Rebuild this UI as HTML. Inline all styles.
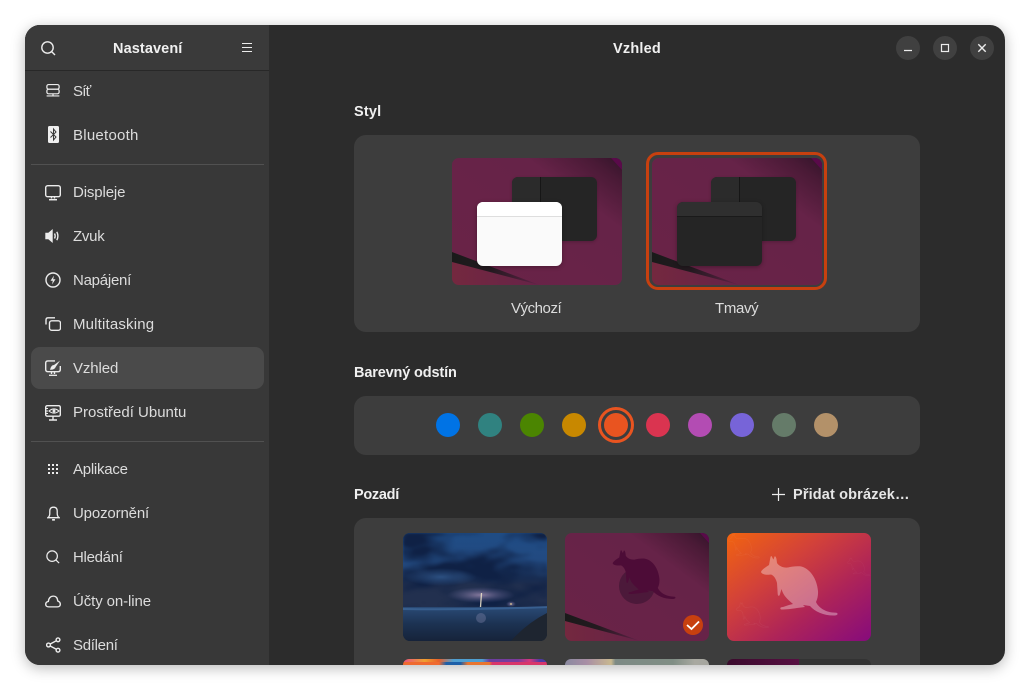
<!DOCTYPE html>
<html><head><meta charset="utf-8"><style>
*{box-sizing:border-box}
html,body{margin:0;width:1030px;height:690px;background:#fff;overflow:hidden;font-family:"Liberation Sans",sans-serif}
.win{position:absolute;left:25px;top:25px;width:980px;height:640px;border-radius:15px;background:#2c2c2c;overflow:hidden}
.shadow{position:absolute;left:25px;top:25px;width:980px;height:640px;border-radius:15px;box-shadow:0 3px 14px rgba(0,0,0,.28)}
.abs,.t,svg.i{position:absolute}
.side{position:absolute;left:0;top:0;width:244px;height:640px;background:#383838}
.head{position:absolute;left:0;top:0;width:244px;height:46px;background:#3a3a3a;border-bottom:1px solid #282828}
.t{white-space:nowrap;color:#dcdcdc;font-size:15px;line-height:18px}
.b{font-weight:bold;color:#f0f0f0;font-size:14.5px;letter-spacing:.2px}
.card{position:absolute;left:329px;width:566px;background:#3d3d3d;border-radius:12px}
.sep{position:absolute;left:6px;width:233px;height:1px;background:#515151}
.dot{position:absolute;width:24px;height:24px;border-radius:50%;top:388px}
.thumb{position:absolute;width:144px;height:108px;border-radius:7px;overflow:hidden}
.low{height:6px;border-radius:7px 7px 0 0}
svg.i{fill:none;stroke:#ececec;stroke-width:1.4}
.btn{position:absolute;top:11px;width:24px;height:24px;border-radius:50%;background:#404040}
</style></head><body>
<div class="shadow"></div>
<div class="win">
<div class="side">
 <div class="t" style="left:48px;top:58px;letter-spacing:-.8px">Síť</div>
 <div class="t" style="left:48px;top:102px;letter-spacing:.25px">Bluetooth</div>
 <div class="sep" style="top:139px"></div>
 <div class="t" style="left:48px;top:159px;letter-spacing:-.13px">Displeje</div>
 <div class="t" style="left:48px;top:203px;letter-spacing:-.25px">Zvuk</div>
 <div class="t" style="left:48px;top:247px;letter-spacing:-.25px">Napájení</div>
 <div class="t" style="left:48px;top:291px;letter-spacing:.17px">Multitasking</div>
 <div class="abs" style="left:6px;top:322px;width:233px;height:42px;border-radius:9px;background:#4a4a4a"></div>
 <div class="t" style="left:48px;top:335px;letter-spacing:-.1px">Vzhled</div>
 <div class="t" style="left:48px;top:379px">Prostředí Ubuntu</div>
 <div class="sep" style="top:416px"></div>
 <div class="t" style="left:48px;top:436px;letter-spacing:-.25px">Aplikace</div>
 <div class="t" style="left:48px;top:480px;letter-spacing:-.15px">Upozornění</div>
 <div class="t" style="left:48px;top:524px;letter-spacing:-.3px">Hledání</div>
 <div class="t" style="left:48px;top:568px;letter-spacing:-.1px">Účty on-line</div>
 <div class="t" style="left:48px;top:612px;letter-spacing:-.3px">Sdílení</div>
 <svg class="i" style="left:21px;top:59px" width="14" height="14" viewBox="0 0 16 17" preserveAspectRatio="none"><rect x="1" y=".7" width="14" height="5.6" rx="2"/><rect x="1" y="6.3" width="14" height="5.6" rx="2"/><path d="M0.7 14.5H15.3M8 12v2.5"/></svg>
 <svg class="i" style="left:23px;top:101px;stroke:none" width="11" height="17" viewBox="0 0 11 17"><rect x="0" y="0" width="11" height="17" rx="1.5" fill="#efefef"/><path d="M2.5 5.5 8 11 5.5 14V3L8 6 2.5 11.5" fill="none" stroke="#383838" stroke-width="1"/></svg>
 <svg class="i" style="left:20px;top:160px" width="16" height="16" viewBox="0 0 16 16"><rect x=".7" y=".7" width="14.6" height="11" rx="2"/><path d="M6.5 12v1.5M9.500 12v1.500" /><path d="M4 14.700H12" stroke-width="1.500"/></svg>
 <svg class="i" style="left:20px;top:203px" width="16" height="16" viewBox="0 0 16 16"><path d="M1 5.500H3.500L7 2.500V13.500L3.500 10.500H1Z" fill="#ececec"/><path d="M9.500 5.500Q10.800 8 9.500 10.500M11.800 3.800Q14 8 11.800 12.200"/></svg>
 <svg class="i" style="left:20px;top:247px" width="16" height="16" viewBox="0 0 16 16"><circle cx="8" cy="8" r="7"/><path d="M9 3.500 5.500 8.700H7.800L7 12.500 10.500 7.300H8.200Z" fill="#ececec" stroke="none"/></svg>
 <svg class="i" style="left:20px;top:292px" width="16" height="14" viewBox="0 0 16 14"><path d="M1 7.500V3Q1 .8 3 .8H10"/><rect x="4.500" y="3.800" width="11" height="9.500" rx="2.200"/></svg>
 <svg class="i" style="left:20px;top:335px" width="16" height="17" viewBox="0 0 16 17"><path d="M10 .9H3Q.7 .9 .7 3V9.500Q.7 11.700 3 11.700H13Q15.300 11.700 15.300 9.500V6"/><path d="M6.500 12v2M9.500 12v2"/><path d="M4 15.300H12" stroke-width="1.300"/><path d="M15 .6 9 5Q6 5 5 9.800Q9.800 10 10.800 6.800Z" fill="#ececec" stroke="none"/></svg>
 <svg class="i" style="left:20px;top:380px" width="16" height="16" viewBox="0 0 16 16"><rect x=".7" y=".7" width="14.600" height="10.500" rx="1.500"/><path d="M4 6Q9 1.800 14 6Q9 10.200 4 6Z" stroke-width="1.100"/><circle cx="9" cy="6" r="1.500" fill="#ececec" stroke="none"/><path d="M1 3.500H3M1 6H3M1 8.500H3" stroke-width="1.100"/><path d="M4 15H12M8 11.500v3.500"/></svg>
 <svg class="i" style="left:23px;top:439px;stroke:none;fill:#ececec" width="10" height="10" viewBox="0 0 10 10"><rect x="0" y="0" width="2" height="2"/><rect x="4" y="0" width="2" height="2"/><rect x="8" y="0" width="2" height="2"/><rect x="0" y="4" width="2" height="2"/><rect x="4" y="4" width="2" height="2"/><rect x="8" y="4" width="2" height="2"/><rect x="0" y="8" width="2" height="2"/><rect x="4" y="8" width="2" height="2"/><rect x="8" y="8" width="2" height="2"/></svg>
 <svg class="i" style="left:21.500px;top:481px" width="13" height="15" viewBox="0 0 14 16"><path d="M1 12.500H13Q11 11 11 8V5.500Q11 1.200 7 1.200Q3 1.200 3 5.500V8Q3 11 1 12.500Z"/><path d="M5.500 14.800H8.500" stroke-width="1.800"/></svg>
 <svg class="i" style="left:21px;top:525px" width="14" height="14" viewBox="0 0 16 16"><circle cx="7" cy="7" r="6"/><path d="M11.300 11.300 15 15"/></svg>
 <svg class="i" style="left:20px;top:570px" width="16" height="13" viewBox="0 0 16 14" preserveAspectRatio="none"><path d="M3.800 12.800Q.7 12.800.7 10Q.7 7.500 3.300 7Q4 1.200 8.500 1.200Q12.300 1.200 12.800 6.500Q15.300 7.500 15.300 10Q15.300 12.800 12.300 12.800Z"/></svg>
 <svg class="i" style="left:21px;top:612px" width="15" height="16" viewBox="0 0 15 16"><circle cx="2.500" cy="8" r="1.900"/><circle cx="12" cy="2.800" r="1.900"/><circle cx="12" cy="13.200" r="1.900"/><path d="M4.200 7 10.300 3.700M4.200 9 10.300 12.300"/></svg>
 <div class="head"></div>
 <div class="t b" style="left:88px;top:15px;letter-spacing:.1px">Nastavení</div>
 <svg class="i" style="left:16px;top:16px" width="15" height="15" viewBox="0 0 15 15"><circle cx="6.500" cy="6.500" r="5.700"/><path d="M10.500 10.500 14 14"/></svg>
 <svg class="i" style="left:217px;top:18px" width="10" height="10" viewBox="0 0 10 10"><path d="M0 .5H10M0 4.500H10M0 8.500H10" stroke-width="1"/></svg>
</div>

<div class="t b" style="left:588px;top:15px">Vzhled</div>
<div class="btn" style="left:871px"></div><div class="btn" style="left:908px"></div><div class="btn" style="left:945px"></div>
<svg class="i" style="left:871px;top:11px" width="24" height="24"><path d="M8 14.500H16" stroke-width="1.200"/></svg>
<svg class="i" style="left:908px;top:11px" width="24" height="24"><rect x="8.500" y="8.500" width="7" height="7" stroke-width="1.200"/></svg>
<svg class="i" style="left:945px;top:11px" width="24" height="24"><path d="M8.300 8.300 15.700 15.700M15.700 8.300 8.300 15.700" stroke-width="1.400"/></svg>

<div class="t b" style="left:329px;top:78px">Styl</div>
<div class="card" style="top:110px;height:197px"></div>
<svg class="abs" style="left:427px;top:133px;border-radius:7px" width="170" height="127" viewBox="0 0 171 127" preserveAspectRatio="none"><use href="#wp"/></svg>
<svg class="abs" style="left:627px;top:133px;border-radius:7px" width="170" height="127" viewBox="0 0 171 127" preserveAspectRatio="none"><use href="#wp"/></svg>
<div class="abs" style="left:621px;top:127px;width:181px;height:138px;border:3px solid #c7400f;border-radius:12px"></div>

<div class="abs" style="left:487px;top:152px;width:85px;height:64px;border-radius:6px;background:#252525;box-shadow:0 1px 3px rgba(0,0,0,.2)"></div>
<div class="abs" style="left:487px;top:152px;width:29px;height:64px;border-radius:6px 0 0 6px;background:#2b2b2b;border-right:1px solid #161616"></div>
<div class="abs" style="left:452px;top:177px;width:85px;height:64px;border-radius:6px;background:#fafafa;box-shadow:0 1px 4px rgba(0,0,0,.3)"></div>
<div class="abs" style="left:452px;top:177px;width:85px;height:15px;border-radius:6px 6px 0 0;background:#fff;border-bottom:1px solid #dedede"></div>

<div class="abs" style="left:686px;top:152px;width:85px;height:64px;border-radius:6px;background:#252525;box-shadow:0 1px 3px rgba(0,0,0,.2)"></div>
<div class="abs" style="left:686px;top:152px;width:29px;height:64px;border-radius:6px 0 0 6px;background:#2b2b2b;border-right:1px solid #161616"></div>
<div class="abs" style="left:652px;top:177px;width:85px;height:64px;border-radius:6px;background:#252525;box-shadow:0 1px 4px rgba(0,0,0,.3)"></div>
<div class="abs" style="left:652px;top:177px;width:85px;height:15px;border-radius:6px 6px 0 0;background:#2f2f2f;border-bottom:1px solid #1a1a1a"></div>
<div class="t" style="left:486px;top:275px;letter-spacing:-.45px">Výchozí</div>
<div class="t" style="left:690px;top:275px;letter-spacing:-.35px">Tmavý</div>

<div class="t b" style="left:329px;top:339px;letter-spacing:-.15px">Barevný odstín</div>
<div class="card" style="top:371px;height:59px"></div>
<div class="dot" style="left:411px;background:#0073e5"></div>
<div class="dot" style="left:453px;background:#308280"></div>
<div class="dot" style="left:495px;background:#4b8501"></div>
<div class="dot" style="left:537px;background:#c88800"></div>
<div class="abs" style="left:573px;top:382px;width:36px;height:36px;border-radius:50%;border:3px solid #e95420"></div>
<div class="dot" style="left:579px;background:#e95420"></div>
<div class="dot" style="left:621px;background:#da3450"></div>
<div class="dot" style="left:663px;background:#b34cb3"></div>
<div class="dot" style="left:705px;background:#7764d8"></div>
<div class="dot" style="left:747px;background:#657b69"></div>
<div class="dot" style="left:789px;background:#b39169"></div>

<div class="t b" style="left:329px;top:461px;letter-spacing:-.3px">Pozadí</div>
<svg class="i" style="left:747px;top:463px" width="13" height="13"><path d="M6.500 0V13M0 6.500H13" stroke-width="1.200"/></svg>
<div class="t b" style="left:768px;top:461px;color:#e6e6e6;letter-spacing:.15px">Přidat obrázek…</div>
<div class="card" style="top:493px;height:147px;border-radius:12px 12px 0 0"></div>

<div class="thumb" style="left:378px;top:508px;background:#123">
<svg width="144" height="108" viewBox="0 0 144 108" style="display:block"><defs>
<linearGradient id="sky" x1="0" y1="0" x2="0" y2="1"><stop offset="0" stop-color="#1f4c85"/><stop offset=".4" stop-color="#234a80"/><stop offset=".6" stop-color="#1c3258"/><stop offset=".68" stop-color="#22304f"/></linearGradient>
<linearGradient id="sea" x1="0" y1="0" x2="0" y2="1"><stop offset="0" stop-color="#2a4a75"/><stop offset=".5" stop-color="#1c3252"/><stop offset="1" stop-color="#16233a"/></linearGradient>
<radialGradient id="gl"><stop offset="0" stop-color="#b49ac0" stop-opacity=".7"/><stop offset="1" stop-color="#6a6aa0" stop-opacity="0"/></radialGradient>
<radialGradient id="lb"><stop offset="0" stop-color="#3f6ea8" stop-opacity=".6"/><stop offset="1" stop-color="#3f6ea8" stop-opacity="0"/></radialGradient>
<filter id="cl" x="0" y="0" width="100%" height="100%" color-interpolation-filters="sRGB"><feTurbulence type="fractalNoise" baseFrequency=".018 .04" numOctaves="3" seed="11"/><feColorMatrix values="0 0 0 0 .06 0 0 0 0 .13 0 0 0 0 .27 3 0 0 0 -1.100"/><feGaussianBlur stdDeviation="1"/></filter>
</defs>
<rect width="144" height="76" fill="url(#sky)"/>
<rect width="144" height="74" filter="url(#cl)"/>
<ellipse cx="38" cy="44" rx="36" ry="9" fill="url(#lb)"/>
<ellipse cx="78" cy="62" rx="34" ry="8" fill="url(#gl)"/>
<path d="M78.500 60 77.500 74" stroke="#e9dfc8" stroke-width="1.300" opacity=".9"/>
<ellipse cx="108" cy="71" rx="5" ry="3" fill="url(#gl)"/><circle cx="108" cy="71" r=".9" fill="#e0c890"/>
<rect y="74" width="144" height="34" fill="url(#sea)"/>
<path d="M0 75Q70 76 144 73V75Q70 78 0 77Z" fill="#3f6a9c" opacity=".7"/>
<path d="M108 108Q124 90 144 80V108Z" fill="#1e2530"/>
<ellipse cx="78" cy="85" rx="5" ry="5" fill="#7d83a8" opacity=".4"/>
</svg></div>

<div class="thumb" style="left:540px;top:508px">
<svg width="144" height="108" viewBox="0 0 144 108" style="display:block"><use href="#wp2"/>
<circle cx="72" cy="53" r="18" fill="#3e1433" opacity=".65"/>
<g transform="translate(19.800 -1.700) scale(.82)"><use href="#roo" fill="#4d0c37"/></g>
<circle cx="128" cy="92" r="10" fill="#c7400f"/><path d="M122 92 126.500 96 134 88.500" fill="none" stroke="#fff" stroke-width="1.800"/>
</svg></div>

<div class="thumb" style="left:702px;top:508px;background:linear-gradient(to bottom right,#f2640f 0%,#d2413a 35%,#ae2458 65%,#860b7c 100%)">
<svg width="144" height="108" viewBox="0 0 144 108" style="display:block"><use href="#roo" fill="#fff" opacity=".34"/>
<g fill="none" stroke="#fff" stroke-opacity=".05" stroke-width="1.500"><g transform="translate(-5 60) scale(.42)"><use href="#roo"/></g><g transform="translate(110 18) scale(.3)"><use href="#roo"/></g><g transform="translate(-12 -8) scale(.4)"><use href="#roo"/></g></g></svg></div>

<div class="thumb low" style="left:378px;top:634px;background:linear-gradient(90deg,#e9527f 0,#f0a030 15%,#e8602a 25%,#4f9fd1 35%,#4f9fd1 55%,#6a3fa0 60%,#7d3a9c 80%,#d8357a 88%,#4e3aa5 95%) 0 0/100% 3px no-repeat,linear-gradient(90deg,#ef6a30 0,#ef6a30 25%,#1d5fa8 30%,#1d5fa8 40%,#e9752f 45%,#e9752f 60%,#d8356a 62%,#d8356a 100%)"></div>
<div class="thumb low" style="left:540px;top:634px;background:linear-gradient(90deg,#8a8aa0 0,#a88ea5 15%,#c8b890 32%,#7d8a85 35%,#808e85 75%,#a8a8a0 90%,#a6a69f 100%)"></div>
<div class="thumb low" style="left:702px;top:634px;background:linear-gradient(90deg,#3a0a2c 0,#570f42 50%,#333 50%,#333 100%)"></div>
</div>

<svg width="0" height="0" style="position:absolute"><defs>
<linearGradient id="wpg" x1="0" y1="1" x2="1" y2="0"><stop offset="0" stop-color="#6a2347"/><stop offset=".72" stop-color="#662348"/><stop offset=".9" stop-color="#4a1a36"/><stop offset="1" stop-color="#33142a"/></linearGradient>
<linearGradient id="st" x1="0" y1="0" x2="1" y2="0"><stop offset="0" stop-color="#1a1a1a"/><stop offset=".45" stop-color="#241a20"/><stop offset=".8" stop-color="#4a1e38"/><stop offset="1" stop-color="#62234a"/></linearGradient>
<linearGradient id="lo" x1="0" y1="0" x2="1" y2="0"><stop offset="0" stop-color="#74283f"/><stop offset="1" stop-color="#662348"/></linearGradient>
<g id="wp"><rect width="171" height="127" fill="url(#wpg)"/><path d="M160 0H171V12Z" fill="#5a0a4a"/><path d="M0 104 88 127H0Z" fill="url(#lo)"/><path d="M0 94 88 127 0 104Z" fill="url(#st)"/></g>
<g id="wp2"><rect width="144" height="108" fill="url(#wpg)"/><path d="M135 0H144V10Z" fill="#5a0a4a"/><path d="M0 88 75 108H0Z" fill="url(#lo)"/><path d="M0 80 75 108 0 88Z" fill="url(#st)"/></g>
<path id="roo" d="M34 39C34.500 37 38 34.500 42 32L43.500 24C44 22.500 45 23 45.500 25L46.500 26.500 47.500 23.500C48.500 23 49 24 49.500 26L50 30C52 33 56 35 61 34.500C64 33.500 69 33 73 33.300C83 35 90 46 91 58C91.300 62 90.500 66 89 69C91 74 98 79 106 79.500L109.500 79.800C111.500 80.500 110.500 82.500 108 82.500C98 83 88 79 83 73L76 72 78 74 70 75C64 76 60 76.500 54 76.500C52.500 75 53.500 74 56 74L62 72 66 71C60 66 56 62 54.500 56L53 61C52.500 63.500 51 63.500 50.700 61L50 50C49 46 47 42.500 44 41.500C41 42 35 42 34 39Z"/>
</defs></svg>
</body></html>
